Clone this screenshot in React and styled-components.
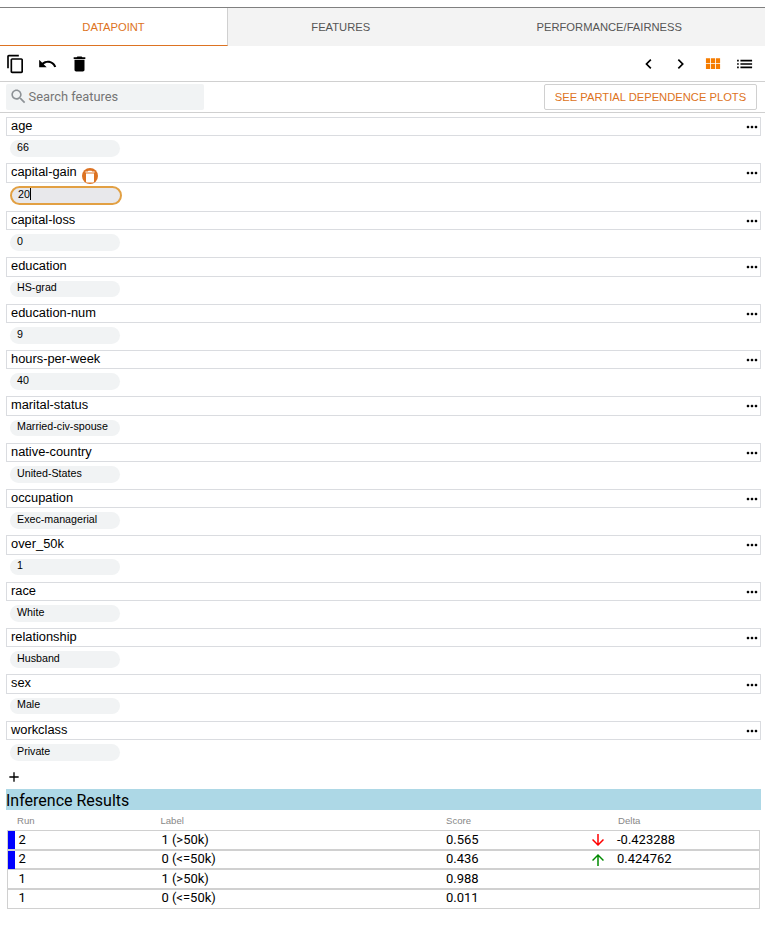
import React from 'react';
import styled, { createGlobalStyle } from 'styled-components';

const GlobalStyle = createGlobalStyle`
  * { box-sizing: border-box; }
  body { margin: 0; background: #fff; color: #000; font-family: "Liberation Sans", Arial, sans-serif; }
`;

const Page = styled.main`
  width: 765px;
  height: 933px;
  padding-top: 7px;
  overflow: hidden;
`;

const Tabs = styled.nav`
  display: grid;
  grid-template-columns: 228px 225.5px 1fr;
  height: 39px;
  border-top: 1px solid #808080;
  background: #f3f3f3;
`;

const Tab = styled.button`
  border: 0;
  border-right: ${(p) => (p.$active ? '1px solid #d0d0d0' : '0')};
  border-bottom: 1px solid ${(p) => (p.$active ? '#dd7322' : 'transparent')};
  background: ${(p) => (p.$active ? '#fff' : 'transparent')};
  color: ${(p) => (p.$active ? '#dd7322' : '#555')};
  font: 11.2px "Liberation Sans", Arial, sans-serif;
  padding: 1px 0 0;
`;

const Toolbar = styled.div`
  display: flex;
  align-items: center;
  justify-content: space-between;
  height: 36px;
  padding: 0 10px 0 5px;
  border-bottom: 1px solid #d0d0d0;
`;

const IconGroup = styled.div`
  display: flex;
  gap: 12px;
  transform: translateX(${(p) => p.$nudge}px);
`;

const Glyph = styled.svg`
  display: block;
  flex: none;
  width: ${(p) => p.$size}px;
  height: ${(p) => p.$size}px;
  fill: ${(p) => p.$color || '#000'};
`;

const SearchBar = styled.div`
  display: flex;
  align-items: center;
  justify-content: space-between;
  height: 31px;
  padding: 0 8px 0 6px;
  border-bottom: 1px solid #d0d0d0;
`;

const SearchField = styled.label`
  display: flex;
  align-items: center;
  gap: 0.5px;
  width: 198px;
  height: 26px;
  padding: 0 0 1px 3px;
  border-radius: 2px;
  background: #f1f3f4;
  color: #757575;
  font: 12.85px Roboto, sans-serif;
`;

const PlotsButton = styled.button`
  width: 213px;
  height: 26px;
  padding: 0;
  border: 1px solid #d0d0d0;
  border-radius: 2px;
  background: #fff;
  color: #dd7322;
  font: 11.2px "Liberation Sans", Arial, sans-serif;
`;

const FeatureList = styled.div`
  padding: 3.92px 4px 0 6px;
`;

const Feature = styled.section`
  height: ${(p) => (p.$editing ? 47.64 : 46.344)}px;
`;

const FeatureHeader = styled.header`
  display: flex;
  height: 19.33px;
  padding: 0 0 0 4px;
  border: 1px solid #dadce0;
`;

const FeatureName = styled.span`
  flex: 1;
  display: flex;
  font-size: 12.85px;
  line-height: 16px;
`;

const MenuButton = styled.span`
  padding-top: 1.2px;
`;

const ClearBadge = styled.span`
  display: flex;
  align-items: center;
  justify-content: center;
  width: 16px;
  height: 16px;
  margin: 4px 0 -4px 5px;
  border-radius: 50%;
  background: #dd7322;
`;

const Value = styled.div`
  display: flex;
  width: ${(p) => (p.$editing ? 112 : 110)}px;
  height: ${(p) => (p.$editing ? 19 : 16.6)}px;
  margin: ${(p) => (p.$editing ? 3.5 : 4.17)}px 0 0 4px;
  padding: ${(p) => (p.$editing ? '0 0 0 6px' : '0.6px 0 0 7px')};
  border: ${(p) => (p.$editing ? '2px solid #e2a043' : '0')};
  border-radius: 10px;
  background: ${(p) => (p.$editing ? '#e8e8eb' : '#f1f3f4')};
  font-size: 10.7px;
  line-height: ${(p) => (p.$editing ? 12 : 13.4)}px;
`;

const Caret = styled.i`
  width: 1px;
  height: 12px;
  background: #000;
`;

const AddRow = styled.div`
  display: flex;
  align-items: center;
  height: 22px;
  padding: 0 0 2px 6px;
`;

const Results = styled.section`
  margin: 0 4px 0 6px;
  font-family: Roboto, sans-serif;
`;

const ResultsTitle = styled.h2`
  height: 21px;
  margin: 0;
  background: #add8e6;
  font: 16px/23px Roboto, sans-serif;
`;

const ResultGrid = styled.div`
  display: grid;
  grid-template-columns: 7px 146.4px 284.6px 143.5px 27.5px 1fr;
  align-items: center;
  margin: 0 1px;
`;

const ResultHead = styled(ResultGrid)`
  height: 20px;
  color: #888;
  font: 9.6px "Liberation Sans", Arial, sans-serif;
`;

const ResultRow = styled(ResultGrid)`
  height: 19.64px;
  border: 1px solid #d0d0d0;
  font-size: 13px;
  line-height: 16.4px;
`;

const Marker = styled.span`
  align-self: stretch;
  background: ${(p) => (p.$on ? '#00f' : 'transparent')};
`;

const Cell = styled.span`
  align-self: start;
  padding-top: 0.58px;
  padding-left: ${(p) => p.$inset || 0}px;
`;

const HeadCell = styled.span`
  padding-left: ${(p) => p.$inset || 0}px;
`;

const paths = {
  copy: 'M16 1H4c-1.1 0-2 .9-2 2v14h2V3h12V1zm3 4H8c-1.1 0-2 .9-2 2v14c0 1.1.9 2 2 2h11c1.1 0 2-.9 2-2V7c0-1.1-.9-2-2-2zm0 16H8V7h11v14z',
  undo: 'M12.5 8c-2.65 0-5.05.99-6.9 2.6L2 7v9h9l-3.62-3.62c1.39-1.16 3.16-1.88 5.12-1.88 3.54 0 6.55 2.31 7.6 5.5l2.37-.78C21.08 11.03 17.15 8 12.5 8z',
  trash: 'M6 19c0 1.1.9 2 2 2h8c1.1 0 2-.9 2-2V7H6v12zM19 4h-3.5l-1-1h-5l-1 1H5v2h14V4z',
  left: 'M15.41 7.41L14 6l-6 6 6 6 1.41-1.41L10.83 12z',
  right: 'M10 6L8.59 7.41 13.17 12l-4.58 4.59L10 18l6-6z',
  module: 'M4 11h5V5H4v6zm0 7h5v-6H4v6zm6 0h5v-6h-5v6zm6 0h5v-6h-5v6zm-6-7h5V5h-5v6zm6-6v6h5V5h-5z',
  list: 'M3 13h2v-2H3v2zm0 4h2v-2H3v2zm0-8h2V7H3v2zm4 4h14v-2H7v2zm0 4h14v-2H7v2zM7 7v2h14V7H7z',
  search: 'M15.5 14h-.79l-.28-.27C15.41 12.59 16 11.11 16 9.5 16 5.91 13.09 3 9.5 3S3 5.91 3 9.5 5.91 16 9.5 16c1.61 0 3.09-.59 4.23-1.57l.27.28v.79l5 4.99L20.49 19l-4.99-5zm-6 0C7.01 14 5 11.99 5 9.5S7.01 5 9.5 5 14 7.01 14 9.5 11.99 14 9.5 14z',
  more: 'M6 10c-1.1 0-2 .9-2 2s.9 2 2 2 2-.9 2-2-.9-2-2-2zm12 0c-1.1 0-2 .9-2 2s.9 2 2 2 2-.9 2-2-.9-2-2-2zm-6 0c-1.1 0-2 .9-2 2s.9 2 2 2 2-.9 2-2-.9-2-2-2z',
  add: 'M19 13h-6v6h-2v-6H5v-2h6V5h2v6h6v2z',
  down: 'M20 12l-1.41-1.41L13 16.17V4h-2v12.17l-5.58-5.59L4 12l8 8 8-8z',
  up: 'M4 12l1.41 1.41L11 7.83V20h2V7.83l5.58 5.59L20 12l-8-8-8 8z',
};

const Icon = ({ name, size = 20, color }) => (
  <Glyph viewBox="0 0 24 24" $size={size} $color={color} aria-hidden="true">
    <path d={paths[name]} />
  </Glyph>
);

const features = [
  ['age', '66'],
  ['capital-gain', '20', true],
  ['capital-loss', '0'],
  ['education', 'HS-grad'],
  ['education-num', '9'],
  ['hours-per-week', '40'],
  ['marital-status', 'Married-civ-spouse'],
  ['native-country', 'United-States'],
  ['occupation', 'Exec-managerial'],
  ['over_50k', '1'],
  ['race', 'White'],
  ['relationship', 'Husband'],
  ['sex', 'Male'],
  ['workclass', 'Private'],
];

const results = [
  { run: 2, label: '1 (>50k)', score: '0.565', dir: 'down', delta: '-0.423288' },
  { run: 2, label: '0 (<=50k)', score: '0.436', dir: 'up', delta: '0.424762' },
  { run: 1, label: '1 (>50k)', score: '0.988' },
  { run: 1, label: '0 (<=50k)', score: '0.011' },
];

export default function App() {
  return (
    <Page>
      <GlobalStyle />
      <Tabs>
        <Tab $active>DATAPOINT</Tab>
        <Tab>FEATURES</Tab>
        <Tab>PERFORMANCE/FAIRNESS</Tab>
      </Tabs>
      <Toolbar>
        <IconGroup $nudge={0.5}>
          <Icon name="copy" />
          <Icon name="undo" />
          <Icon name="trash" />
        </IconGroup>
        <IconGroup $nudge={-0.4}>
          <Icon name="left" />
          <Icon name="right" />
          <Icon name="module" color="#f57c00" />
          <Icon name="list" />
        </IconGroup>
      </Toolbar>
      <SearchBar>
        <SearchField>
          <Icon name="search" size={19} color="#8d9296" />
          Search features
        </SearchField>
        <PlotsButton>SEE PARTIAL DEPENDENCE PLOTS</PlotsButton>
      </SearchBar>
      <FeatureList>
        {features.map(([name, value, editing]) => (
          <Feature key={name} $editing={editing}>
            <FeatureHeader>
              <FeatureName>
                {name}
                {editing && (
                  <ClearBadge>
                    <Glyph viewBox="0 0 16 16" $size={16} $color="#fff">
                      <path d="M4 5.4h8v8.2q0 .9-.9.9H4.9q-.9 0-.9-.9zM3.4 3.4h2.4l.7-.7h3l.7.7h2.4v1H3.4z" />
                    </Glyph>
                  </ClearBadge>
                )}
              </FeatureName>
              <MenuButton>
                <Icon name="more" size={16} />
              </MenuButton>
            </FeatureHeader>
            <Value $editing={editing}>
              {value}
              {editing && <Caret />}
            </Value>
          </Feature>
        ))}
      </FeatureList>
      <AddRow>
        <Icon name="add" size={16} />
      </AddRow>
      <Results>
        <ResultsTitle>Inference Results</ResultsTitle>
        <ResultHead>
          <span />
          <HeadCell $inset={3}>Run</HeadCell>
          <HeadCell>Label</HeadCell>
          <HeadCell $inset={1}>Score</HeadCell>
          <span />
          <HeadCell $inset={2}>Delta</HeadCell>
        </ResultHead>
        {results.map((r) => (
          <ResultRow key={r.run + r.label}>
            <Marker $on={r.run === 2} />
            <Cell $inset={3.6}>{r.run}</Cell>
            <Cell>{r.label}</Cell>
            <Cell>{r.score}</Cell>
            <span>{r.dir && <Icon name={r.dir} size={18} color={r.dir === 'up' ? '#008a00' : '#f00'} />}</span>
            <Cell>{r.delta}</Cell>
          </ResultRow>
        ))}
      </Results>
    </Page>
  );
}
